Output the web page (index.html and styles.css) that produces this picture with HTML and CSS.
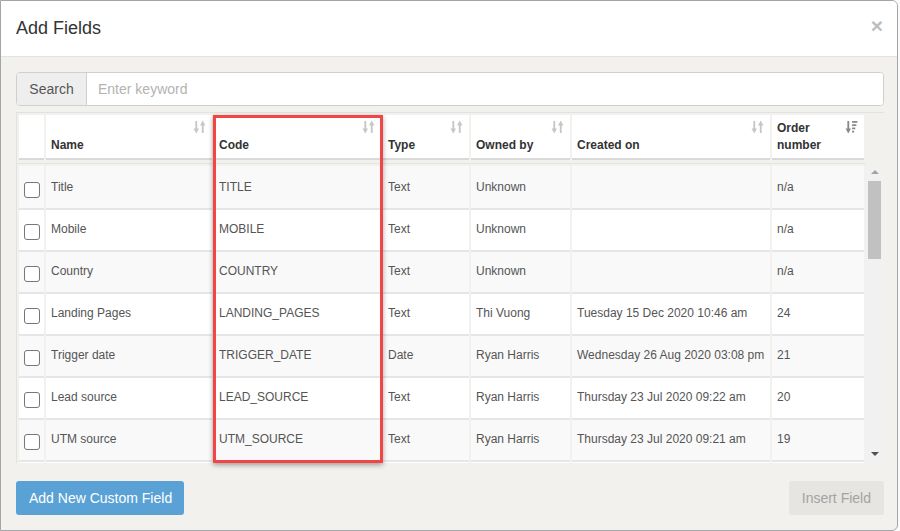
FILE: index.html
```html
<!DOCTYPE html>
<html lang="en">
<head>
  <meta charset="UTF-8">
  <title>Add Fields</title>
  <link rel="stylesheet" href="styles.css">
</head>
<body>
  <div class="modal">
    <div class="modal-header">
      <h4 class="modal-title">Add Fields</h4>
      <span class="close">&times;</span>
    </div>
    <div class="modal-body">
      <div class="search">
        <span class="search-addon">Search</span>
        <input class="search-input" type="text" placeholder="Enter keyword">
      </div>
      <div class="grid">
        <table class="grid-head">
          <colgroup>
            <col class="c-chk"><col class="c-name"><col class="c-code"><col class="c-type">
            <col class="c-owner"><col class="c-created"><col class="c-order">
          </colgroup>
          <tr>
            <th></th>
            <th>Name<svg class="sort" viewBox="0 0 12 13"><path d="M3 1v8M9 4v8"/><polygon points="0.5,8 5.5,8 3,12.5"/><polygon points="6.5,5 11.5,5 9,0.5"/></svg></th>
            <th>Code<svg class="sort" viewBox="0 0 12 13"><path d="M3 1v8M9 4v8"/><polygon points="0.5,8 5.5,8 3,12.5"/><polygon points="6.5,5 11.5,5 9,0.5"/></svg></th>
            <th>Type<svg class="sort" viewBox="0 0 12 13"><path d="M3 1v8M9 4v8"/><polygon points="0.5,8 5.5,8 3,12.5"/><polygon points="6.5,5 11.5,5 9,0.5"/></svg></th>
            <th>Owned by<svg class="sort" viewBox="0 0 12 13"><path d="M3 1v8M9 4v8"/><polygon points="0.5,8 5.5,8 3,12.5"/><polygon points="6.5,5 11.5,5 9,0.5"/></svg></th>
            <th>Created on<svg class="sort" viewBox="0 0 12 13"><path d="M3 1v8M9 4v8"/><polygon points="0.5,8 5.5,8 3,12.5"/><polygon points="6.5,5 11.5,5 9,0.5"/></svg></th>
            <th>Order<br>number<svg class="sort active" viewBox="0 0 12 13"><path d="M3 1v8"/><polygon points="0.5,8 5.5,8 3,12.5"/><rect x="6.5" y="1" width="5" height="1.6"/><rect x="6.5" y="4" width="4" height="1.6"/><rect x="6.5" y="7" width="3" height="1.6"/><rect x="6.5" y="10" width="2" height="1.6"/></svg></th>
          </tr>
        </table>
        <div class="grid-body">
          <div class="viewport">
            <table class="grid-rows">
              <colgroup>
                <col class="c-chk"><col class="c-name"><col class="c-code"><col class="c-type">
                <col class="c-owner"><col class="c-created"><col class="c-order">
              </colgroup>
              <tr><td><span class="chk"></span></td><td>Title</td><td>TITLE</td><td>Text</td><td>Unknown</td><td></td><td>n/a</td></tr>
              <tr><td><span class="chk"></span></td><td>Mobile</td><td>MOBILE</td><td>Text</td><td>Unknown</td><td></td><td>n/a</td></tr>
              <tr><td><span class="chk"></span></td><td>Country</td><td>COUNTRY</td><td>Text</td><td>Unknown</td><td></td><td>n/a</td></tr>
              <tr><td><span class="chk"></span></td><td>Landing Pages</td><td>LANDING_PAGES</td><td>Text</td><td>Thi Vuong</td><td>Tuesday 15 Dec 2020 10:46 am</td><td>24</td></tr>
              <tr><td><span class="chk"></span></td><td>Trigger date</td><td>TRIGGER_DATE</td><td>Date</td><td>Ryan Harris</td><td>Wednesday 26 Aug 2020 03:08 pm</td><td>21</td></tr>
              <tr><td><span class="chk"></span></td><td>Lead source</td><td>LEAD_SOURCE</td><td>Text</td><td>Ryan Harris</td><td>Thursday 23 Jul 2020 09:22 am</td><td>20</td></tr>
              <tr><td><span class="chk"></span></td><td>UTM source</td><td>UTM_SOURCE</td><td>Text</td><td>Ryan Harris</td><td>Thursday 23 Jul 2020 09:21 am</td><td>19</td></tr>
              <tr><td></td><td></td><td></td><td></td><td></td><td></td><td></td></tr>
            </table>
          </div>
          <div class="scrollbar">
            <span class="arrow-up"></span>
            <span class="thumb"></span>
            <span class="arrow-down"></span>
          </div>
        </div>
        <div class="highlight"></div>
      </div>
    </div>
    <div class="modal-footer">
      <button class="btn btn-primary">Add New Custom Field</button>
      <button class="btn btn-disabled">Insert Field</button>
    </div>
  </div>
</body>
</html>
```
FILE: styles.css
```css
html, body {
  margin: 0;
  padding: 0;
  background-color: #fafafa;
  font-family: "Liberation Sans", Arial, sans-serif;
}
.modal {
  width: 898px;
  height: 531px;
  box-sizing: border-box;
  border: 1px solid #a5a5a5;
  border-radius: 0 6px 6px 0;
  background-color: #f2f1ed;
  overflow: hidden;
  display: flex;
  flex-direction: column;
}
.modal-header {
  height: 55px;
  padding: 0 14px 0 15px;
  display: flex;
  align-items: center;
  justify-content: space-between;
  background-color: #fff;
  border-bottom: 1px solid #e3e3e3;
}
.modal-title {
  margin: 0;
  font-size: 18px;
  font-weight: normal;
  color: #333;
}
.close {
  font-size: 21px;
  font-weight: bold;
  color: #bdbdbd;
  line-height: 1;
  margin-top: -6px;
}
.modal-body {
  padding: 15px 13px 0 15px;
}
.search {
  display: flex;
  height: 34px;
  box-sizing: border-box;
  border: 1px solid #cfcfcf;
  border-radius: 4px;
  background-color: #fff;
  overflow: hidden;
}
.search-addon {
  width: 69px;
  display: flex;
  align-items: center;
  justify-content: center;
  background-color: #eee;
  border-right: 1px solid #cfcfcf;
  font-size: 14px;
  color: #555;
}
.search-input {
  flex: 1;
  border: 0;
  outline: 0;
  padding: 0 11px;
  font-family: inherit;
  font-size: 14px;
  color: #555;
}
.search-input::placeholder {
  color: #b3b3b3;
}
.grid {
  position: relative;
  margin-top: 6px;
  border-top: 1px solid #e2e2e0;
  border-left: 1px solid #e2e2e0;
}
.grid table {
  table-layout: fixed;
  width: 849px;
  font-size: 12px;
}
.c-chk { width: 25px; }
.c-name { width: 166px; }
.c-code { width: 167px; }
.c-type { width: 86px; }
.c-owner { width: 99px; }
.c-created { width: 198px; }
.c-order { width: 92px; }
.grid-head {
  border-spacing: 2px;
}
.grid-head th {
  position: relative;
  box-sizing: border-box;
  height: 45px;
  padding: 4px 5px 4px;
  line-height: 17px;
  vertical-align: bottom;
  text-align: left;
  background-color: #fff;
  border-bottom: 2px solid #d9d9d9;
  color: #333;
}
.sort {
  position: absolute;
  top: 5px;
  right: 6px;
  width: 13px;
  height: 14px;
  fill: #c6c6c6;
  stroke: #c6c6c6;
  stroke-width: 1.7;
}
.sort.active {
  fill: #888;
  stroke: #888;
}
.sort rect, .sort polygon {
  stroke: none;
}
.grid-body {
  display: flex;
  margin-top: 1px;
  height: 300px;
}
.viewport {
  width: 849px;
  overflow: hidden;
  border-top: 1px solid #e4e4e2;
}
.grid-rows {
  margin-top: 2px;
  border-spacing: 2px 0;
}
.grid-rows td {
  box-sizing: border-box;
  height: 42px;
  padding: 0 5px 2px;
  border-top: 2px solid #e6e6e6;
  color: #555;
  white-space: nowrap;
  overflow: hidden;
}
.grid-rows tr:nth-child(odd) td {
  background-color: #f9f9f9;
}
.grid-rows tr:nth-child(even) td {
  background-color: #fff;
}
.grid-rows tr:first-child td {
  border-top-color: #f9f9f9;
}
.grid-rows td:first-child {
  padding: 0;
  text-align: center;
}
.chk {
  display: inline-block;
  width: 16px;
  height: 16px;
  box-sizing: border-box;
  margin-top: 7px;
  border: 1.5px solid #767676;
  border-radius: 3px;
  background-color: #fff;
}
.scrollbar {
  width: 17px;
  background-color: #f1f1f1;
  display: flex;
  flex-direction: column;
  align-items: center;
}
.arrow-up {
  margin-top: 7px;
  border-left: 4px solid transparent;
  border-right: 4px solid transparent;
  border-bottom: 4px solid #a3a3a3;
}
.thumb {
  margin-top: 7px;
  width: 13px;
  height: 78px;
  background-color: #c1c1c1;
}
.arrow-down {
  margin-top: auto;
  margin-bottom: 7px;
  border-left: 4px solid transparent;
  border-right: 4px solid transparent;
  border-top: 4px solid #505050;
}
.highlight {
  position: absolute;
  left: 196px;
  top: 2px;
  width: 170px;
  height: 348px;
  box-sizing: border-box;
  border: 3px solid #f24545;
  box-shadow: 0 2px 5px rgba(0, 0, 0, 0.35);
}
.modal-footer {
  display: flex;
  justify-content: space-between;
  padding: 18px 13px 0 15px;
}
.btn {
  height: 34px;
  padding: 0 12px 0 13px;
  border: 0;
  border-radius: 3px;
  font-family: inherit;
  font-size: 14px;
}
.btn-primary {
  background-color: #5aa1d5;
  color: #fff;
}
.btn-disabled {
  padding: 0 13px;
  background-color: #e6e5e1;
  color: #a3a3a3;
}
```
